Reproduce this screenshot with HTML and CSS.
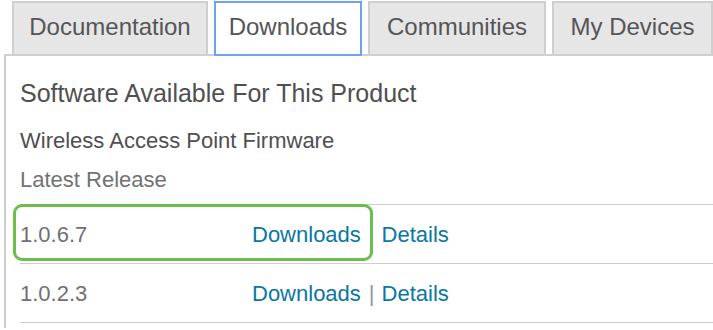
FILE: index.html
```html
<!DOCTYPE html>
<html lang="en">
<head>
    <meta charset="UTF-8">
    <meta name="viewport" content="width=device-width, initial-scale=1.0">
    <title>Software Downloads</title>
    <link rel="stylesheet" href="styles.css">
</head>
<body>
    <div class="page">
        <div class="tabs">
            <div class="tab tab-docs">Documentation</div>
            <div class="tab tab-downloads active">Downloads</div>
            <div class="tab tab-communities">Communities</div>
            <div class="tab tab-devices">My Devices</div>
        </div>
        <div class="panel">
            <h2 class="title">Software Available For This Product</h2>
            <div class="product">Wireless Access Point Firmware</div>
            <div class="release-label">Latest Release</div>
            <div class="releases">
                <div class="release">
                    <span class="version">1.0.6.7</span>
                    <a class="link" href="#">Downloads</a>
                    <span class="sep">|</span>
                    <a class="link" href="#">Details</a>
                    <div class="highlight"></div>
                </div>
                <div class="release">
                    <span class="version">1.0.2.3</span>
                    <a class="link" href="#">Downloads</a>
                    <span class="sep">|</span>
                    <a class="link" href="#">Details</a>
                </div>
            </div>
        </div>
    </div>
</body>
</html>
```

FILE: styles.css
```css
body {
    margin: 0;
    font-family: "Liberation Sans", Arial, sans-serif;
    color: #58585b;
    background-color: #fff;
}
.page {
    padding-left: 4px;
}
.tabs {
    display: flex;
    gap: 6px;
    margin: 1px 0 -2px 8px;
    position: relative;
    z-index: 1;
}
.tab {
    box-sizing: border-box;
    height: 55px;
    padding-top: 10px;
    font-size: 24px;
    line-height: 28px;
    text-align: center;
    color: #555558;
    background-color: #e6e6e6;
    border: 2px solid #cfcfcf;
}
.tab.active {
    background-color: #fff;
    border-color: #6fa3ef;
}
.tab-docs { width: 196px; }
.tab-downloads { width: 148px; }
.tab-communities { width: 178px; }
.tab-devices { width: 161px; }
.panel {
    border-top: 2px solid #cfcfcf;
    border-left: 2px solid #cfcfcf;
    padding: 22px 0 0 14px;
    height: 250px;
}
.title {
    margin: 0;
    font-size: 25px;
    font-weight: normal;
    line-height: 30px;
    color: #4f4f52;
}
.product {
    margin-top: 20px;
    font-size: 22px;
    line-height: 26px;
    color: #4f4f52;
}
.release-label {
    margin-top: 13px;
    font-size: 22px;
    line-height: 26px;
    color: #727275;
}
.releases {
    margin-top: 11px;
    border-top: 1px solid #cdcdcd;
}
.release {
    position: relative;
    display: flex;
    align-items: center;
    box-sizing: border-box;
    height: 59px;
    padding-top: 2px;
    border-bottom: 1px solid #cdcdcd;
    font-size: 22px;
}
.version {
    width: 232px;
    color: #707073;
}
.link {
    color: #0a77a3;
    text-decoration: none;
}
.sep {
    margin: 0 7px 0 8px;
    color: #8d98a3;
}
.highlight {
    position: absolute;
    left: -7px;
    top: -1px;
    width: 360px;
    height: 57px;
    box-sizing: border-box;
    border: 3px solid #6cbf4c;
    border-radius: 9px;
}
```
